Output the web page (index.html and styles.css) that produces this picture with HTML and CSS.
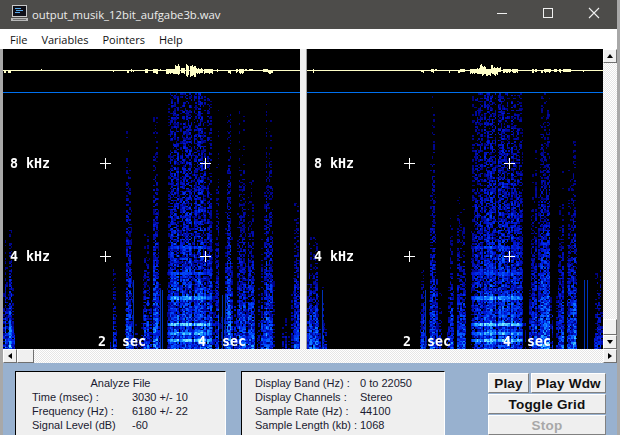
FILE: index.html
```html
<!doctype html>
<html>

<head>
    <meta charset="utf-8" />
    <title>output_musik_12bit_aufgabe3b.wav</title>
    <link rel="stylesheet" href="styles.css">
</head>

<body>
    <div class="window">
        <div class="titlebar">
            <svg class="app-icon" width="17" height="17" viewBox="0 0 17 17">
                <rect x="1" y="0" width="15" height="12" fill="#c8c8c8" />
                <rect x="2" y="1" width="13" height="10" fill="#101018" />
                <rect x="4" y="3" width="6" height="1" fill="#58a8e8" />
                <rect x="5" y="5" width="7" height="1" fill="#58a8e8" />
                <rect x="4" y="7" width="5" height="1" fill="#58a8e8" />
                <rect x="0" y="13" width="17" height="3" fill="#b8b8b8" />
                <rect x="2" y="14" width="13" height="1" fill="#707070" />
            </svg>
            <span class="title">output_musik_12bit_aufgabe3b.wav</span>
            <div class="controls">
                <svg width="46" height="29" viewBox="0 0 46 29">
                    <rect x="18" y="13" width="10" height="1" fill="#f0f0f0" />
                </svg>
                <svg width="46" height="29" viewBox="0 0 46 29">
                    <rect x="18.5" y="8.5" width="9" height="9" fill="none" stroke="#f0f0f0" />
                </svg>
                <svg width="46" height="29" viewBox="0 0 46 29">
                    <path d="M18 8 L28 18 M28 8 L18 18" stroke="#f0f0f0" stroke-width="1.1" />
                </svg>
            </div>
        </div>
        <div class="menubar">
            <span class="menu-item">File</span>
            <span class="menu-item">Variables</span>
            <span class="menu-item">Pointers</span>
            <span class="menu-item">Help</span>
        </div>
        <div class="client">
            <div class="panes">
                <div class="pane pane-left">
                    <canvas id="left" width="297" height="300"></canvas>
                    <span class="freq freq-8">8 kHz</span>
                    <span class="freq freq-4">4 kHz</span>
                    <span class="sec sec-2">2  sec</span>
                    <span class="sec sec-4">4  sec</span>
                </div>
                <div class="pane-gap"></div>
                <div class="pane pane-right">
                    <canvas id="right" width="296" height="300"></canvas>
                    <span class="freq freq-8">8 kHz</span>
                    <span class="freq freq-4">4 kHz</span>
                    <span class="sec sec-2">2  sec</span>
                    <span class="sec sec-4">4  sec</span>
                </div>
                <div class="vscroll">
                    <div class="scroll-btn"><i class="arrow arrow-up"></i></div>
                    <div class="track"></div>
                    <div class="scroll-btn scroll-thumb"></div>
                    <div class="scroll-btn"><i class="arrow arrow-down"></i></div>
                </div>
            </div>
            <div class="hscroll">
                <div class="scroll-btn"><i class="arrow arrow-left"></i></div>
                <div class="scroll-btn scroll-thumb-h"></div>
                <div class="track"></div>
                <div class="scroll-btn"><i class="arrow arrow-right"></i></div>
            </div>
            <div class="bottom">
                <div class="panel panel-file">
                    <div class="panel-head">Analyze File</div>
                    <div class="row"><span>Time (msec) :</span><span>3030 +/- 10</span></div>
                    <div class="row"><span>Frequency (Hz) :</span><span>6180 +/- 22</span></div>
                    <div class="row"><span>Signal Level (dB)</span><span>-60</span></div>
                </div>
                <div class="panel panel-info">
                    <div class="row"><span>Display Band (Hz) :</span><span>0 to 22050</span></div>
                    <div class="row"><span>Display Channels :</span><span>Stereo</span></div>
                    <div class="row"><span>Sample Rate (Hz) :</span><span>44100</span></div>
                    <div class="row"><span>Sample Length (kb) :</span><span>1068</span></div>
                </div>
                <div class="buttons">
                    <div class="btn-row">
                        <button class="btn btn-play">Play</button>
                        <button class="btn btn-wdw">Play Wdw</button>
                    </div>
                    <button class="btn">Toggle Grid</button>
                    <button class="btn btn-off">Stop</button>
                </div>
            </div>
        </div>
    </div>
    <script src="spectrogram.js"></script>
</body>

</html>
```

FILE: styles.css
```css
html,
body {
    margin: 0;
    padding: 0;
    width: 620px;
    height: 435px;
    overflow: hidden;
    background: #98b1cf;
}

* {
    font-family: 'Liberation Sans', sans-serif;
    box-sizing: border-box;
}

.window {
    width: 620px;
    height: 435px;
    display: flex;
    flex-direction: column;
    border-right: 3px solid #a8a8a8;
}

.titlebar {
    height: 29px;
    flex: none;
    background: #4d4c4a;
    display: flex;
    align-items: center;
    padding-left: 11px;
}

.app-icon {
    margin-top: -3px;
}

.title {
    margin-left: 4px;
    margin-top: -1px;
    font-family: 'Open Sans', sans-serif;
    font-size: 11.3px;
    color: #ececec;
}

.controls {
    margin-left: auto;
    display: flex;
}

.controls svg {
    display: block;
}

.menubar {
    height: 20px;
    flex: none;
    background: #fff;
    display: flex;
    align-items: center;
    padding-left: 10px;
    gap: 14px;
}

.menu-item {
    font-family: 'Open Sans', sans-serif;
    font-size: 11px;
    color: #111;
}

.client {
    flex: 1;
    display: flex;
    flex-direction: column;
    border-left: 3px solid #a8a8a8;
    min-height: 0;
}

.panes {
    height: 300px;
    flex: none;
    display: flex;
    background: #f0f0f0;
}

.pane {
    position: relative;
    background: #000;
}

.pane canvas {
    display: block;
}

.pane-gap {
    width: 7px;
    border-right: 1px solid #a0a0a0;
}

.freq,
.sec {
    position: absolute;
    font-family: 'DejaVu Sans Mono', monospace;
    font-weight: bold;
    font-size: 13.3px;
    line-height: 14px;
    color: #fff;
    white-space: pre;
}

.freq {
    left: 7px;
}

.freq-8 {
    top: 108px;
}

.freq-4 {
    top: 201px;
}

.sec {
    top: 286px;
}

.pane-left .sec-2 {
    left: 95px;
}

.pane-left .sec-4 {
    left: 195px;
}

.pane-right .sec-2 {
    left: 96px;
}

.pane-right .sec-4 {
    left: 196px;
}

.vscroll {
    width: 14px;
    display: flex;
    flex-direction: column;
}

.hscroll {
    height: 14px;
    flex: none;
    display: flex;
}

.track {
    flex: 1;
    background: repeating-conic-gradient(#e6e6e6 0 25%, #fff 0 50%) 0 0 / 2px 2px;
}

.scroll-btn {
    width: 14px;
    height: 14px;
    flex: none;
    background: #f0f0f0;
    border-top: 1px solid #fff;
    border-left: 1px solid #fff;
    border-right: 1px solid #707070;
    border-bottom: 1px solid #707070;
    display: flex;
    align-items: center;
    justify-content: center;
}

.scroll-thumb {
    height: 16px;
}

.scroll-thumb-h {
    width: 17px;
}

.arrow {
    display: block;
    width: 0;
    height: 0;
    border: 3px solid transparent;
}

.arrow-up {
    border-top: 0;
    border-bottom: 4px solid #000;
}

.arrow-down {
    border-bottom: 0;
    border-top: 4px solid #000;
}

.arrow-left {
    border-left: 0;
    border-right: 4px solid #000;
}

.arrow-right {
    border-right: 0;
    border-left: 4px solid #000;
}

.bottom {
    flex: 1;
    display: flex;
    align-items: flex-start;
    background: #98b1cf;
    padding: 8px 0 0 12px;
    min-height: 0;
}

.panel {
    height: 64px;
    background: #efefef;
    border-top: 1px solid #000;
    border-left: 1px solid #000;
    border-right: 1px solid #fff;
    font-size: 11px;
    line-height: 14px;
    color: #1a1a30;
    padding-top: 4px;
}

.panel-file {
    width: 211px;
    padding-left: 16px;
}

.panel-info {
    width: 204px;
    margin-left: 15px;
    padding-left: 13px;
}

.panel-head {
    text-align: center;
    padding-right: 16px;
}

.row {
    display: flex;
}

.panel-file .row span:first-child {
    width: 100px;
    flex: none;
}

.panel-info .row span:first-child {
    width: 105px;
    flex: none;
}

.buttons {
    width: 118px;
    margin-left: 43px;
    margin-top: 2px;
    display: flex;
    flex-direction: column;
    gap: 1px;
}

.btn-row {
    display: flex;
    gap: 2px;
}

.btn {
    height: 20px;
    width: 100%;
    flex: none;
    padding: 0;
    background: #efefef;
    border-top: 1px solid #fff;
    border-left: 1px solid #fff;
    border-right: 1px solid #808080;
    border-bottom: 1px solid #808080;
    font-size: 13.5px;
    font-weight: bold;
    letter-spacing: .2px;
    color: #111;
}

.btn-play {
    width: 41px;
}

.btn-wdw {
    width: 75px;
}

.btn-off {
    color: #a8a8a8;
}
```

FILE: spectrogram.js
```javascript
// x positions are page pixels, the pane offset is taken off when drawing
// streak: [x, half width, top y, strength]
const leftStreaks = [
    [4, 1, 225, .9], [10, 1, 228, .95], [113, 1, 222, .7], [128, 2, 115, .85],
    [138, 1, 250, .6], [146, 2, 200, .8], [155, 2, 105, .9], [189, 22, 93, 1],
    [207, 3, 93, .85], [217, 1, 100, .75], [228, 2, 110, .85], [231, 1, 200, .85],
    [241, 3, 110, .85], [248, 4, 180, .9], [260, 1, 200, .7], [268, 3, 100, .9],
    [285, 1, 270, .55], [295, 2, 160, .7]
];
const rightStreaks = [
    [309, 2, 235, 1], [314, 2, 235, 1], [322, 1, 275, .8], [422, 1, 243, .75],
    [432, 2, 95, .85], [439, 1, 250, .65], [450, 1, 215, .8], [458, 1, 135, .65],
    [461, 2, 190, .85], [497, 25, 93, 1], [533, 2, 140, .85], [544, 5, 93, .9],
    [560, 2, 165, .75], [571, 3, 140, .85], [598, 2, 220, .7]
];
// solid thin lines: [x, top y]
const leftSolid = [[133, 280], [160, 290], [162, 290], [222, 295], [225, 295]];
const rightSolid = [[322, 290], [425, 290], [584, 280], [587, 280]];

// waveform blips: [x from, x to, up, down]
const leftBlips = [
    [4, 5, 0, 2], [8, 10, 0, 2], [41, 41, 1, 0], [113, 113, 0, 2], [127, 128, 0, 2],
    [131, 131, 1, 1], [133, 133, 0, 1], [145, 147, 1, 3], [153, 157, 1, 3], [160, 160, 1, 0],
    [166, 174, 1, 3], [175, 179, 7, 4], [181, 184, 2, 3], [186, 188, 6, 7],
    [190, 195, 5, 6], [196, 202, 2, 3], [204, 212, 1, 3], [217, 217, 1, 1],
    [228, 230, 0, 3], [236, 237, 1, 2], [239, 243, 1, 3], [245, 246, 1, 0], [249, 252, 1, 0],
    [263, 267, 1, 1], [268, 272, 0, 3]
];
const rightBlips = [
    [313, 313, 1, 2], [421, 423, 0, 2], [431, 433, 1, 2], [435, 436, 1, 0], [449, 449, 0, 2],
    [458, 459, 0, 2], [460, 464, 1, 1], [470, 476, 1, 3], [477, 479, 2, 5], [480, 481, 7, 3],
    [482, 485, 4, 5], [486, 490, 1, 5], [491, 492, 7, 3], [493, 497, 3, 5], [498, 500, 3, 1],
    [503, 510, 1, 2], [512, 517, 1, 2], [532, 533, 1, 2], [535, 536, 1, 2], [541, 542, 0, 2],
    [544, 550, 1, 2], [554, 556, 1, 1], [559, 560, 1, 2], [563, 570, 1, 1], [583, 583, 0, 2]
];
const crosses = [[102, 114], [202, 114], [102, 207], [202, 207]];
const bandRows = [[247, .14], [272, .22], [297, .6], [323, 1], [332, .6], [340, .9]];

const stops = [[0, 0, 120], [0, 25, 220], [0, 85, 255], [30, 160, 255], [130, 235, 255]];

function makeRandom(seed) {
    return function () {
        seed = (seed + 0x6D2B79F5) | 0;
        let t = Math.imul(seed ^ (seed >>> 15), 1 | seed);
        t = (t + Math.imul(t ^ (t >>> 7), 61 | t)) ^ t;
        return ((t ^ (t >>> 14)) >>> 0) / 4294967296;
    };
}

function colorAt(v) {
    let p = Math.max(0, Math.min(v, .999)) * (stops.length - 1),
        i = Math.floor(p), f = p - i,
        a = stops[i], b = stops[i + 1];
    return 'rgb(' + Math.round(a[0] + (b[0] - a[0]) * f) + ',' +
        Math.round(a[1] + (b[1] - a[1]) * f) + ',' +
        Math.round(a[2] + (b[2] - a[2]) * f) + ')';
}

function drawPane(id, originX, streaks, solid, blips, seed) {
    const ctx = document.getElementById(id).getContext('2d');
    const rnd = makeRandom(seed);
    const w = ctx.canvas.width;
    const originY = 49;

    ctx.fillStyle = '#000';
    ctx.fillRect(0, 0, w, 300);

    // each time slice gets its own gain, this makes the vertical stripes
    const cellW = 1.5, cellH = 1.5;
    const gains = [];
    for (let i = 0; i < w / cellW + 1; i++) {
        let g = .8 + rnd() * .3;
        if (i % 9 == 0) g = .55;
        gains.push(g);
    }

    for (let cy = 93; cy < 349; cy += cellH) {
        let col = 0;
        for (let cx = originX; cx < originX + w; cx += cellW, col++) {
            let level = 0, floor = .2, inBand = false;
            for (const s of streaks) {
                if (cy < s[2]) continue;
                let depth = (cy - s[2]) / (349 - s[2]);
                let dist = Math.abs(cx - s[0]);
                // streaks spread out towards the low frequencies
                if (dist > s[1] + 1 + depth * depth * 2) continue;
                let wide = s[1] > 10;
                let edge = dist > s[1] ? .7 : 1;
                let l;
                if (wide) {
                    l = .46 + .3 * depth;
                    for (const band of bandRows) {
                        if (Math.abs(cy - band[0]) < 2) {
                            l += band[1] * .62;
                            inBand = true;
                        }
                    }
                    l *= 1 - .3 * Math.pow(dist / s[1], 4);
                } else {
                    l = .36 + .62 * Math.pow(depth, 1.6);
                }
                floor = Math.max(floor, .2 + .26 * depth * depth);
                level = Math.max(level, l * s[3] * edge);
            }
            if (level <= 0) continue;
            let v = level * gains[col] * (inBand ? .75 + rnd() * .35 : floor + rnd() * .9);
            if (v < .3) continue;
            ctx.fillStyle = colorAt((v - .3) * 1.05);
            let x0 = Math.round(cx - originX), x1 = Math.round(cx + cellW - originX);
            let y0 = Math.round(cy - originY), y1 = Math.round(cy + cellH - originY);
            ctx.fillRect(x0, y0, x1 - x0, y1 - y0);
        }
    }

    // thin solid lines low down
    for (const line of solid) {
        ctx.fillStyle = '#0032b8';
        ctx.fillRect(line[0] - originX, line[1] - originY, 1, 349 - line[1]);
    }

    // blue rule under the waveform
    ctx.fillStyle = '#0070f0';
    ctx.fillRect(0, 92 - originY, w, 1);

    // waveform, heights vary per sample inside a blip
    ctx.fillStyle = '#ffffc8';
    ctx.fillRect(0, 70 - originY, w, 1);
    for (const b of blips) {
        for (let x = b[0]; x <= b[1]; x++) {
            let up = Math.round(b[2] * (.6 + rnd() * .4));
            let down = Math.round(b[3] * (.6 + rnd() * .4));
            ctx.fillRect(x - originX, 70 - originY - up, 1, up + down + 1);
        }
    }

    // grid crosses
    ctx.fillStyle = '#fff';
    for (const c of crosses) {
        ctx.fillRect(c[0] - 5, c[1], 11, 1);
        ctx.fillRect(c[0], c[1] - 5, 1, 11);
    }
}

drawPane('left', 3, leftStreaks, leftSolid, leftBlips, 11);
drawPane('right', 307, rightStreaks, rightSolid, rightBlips, 29);
```
